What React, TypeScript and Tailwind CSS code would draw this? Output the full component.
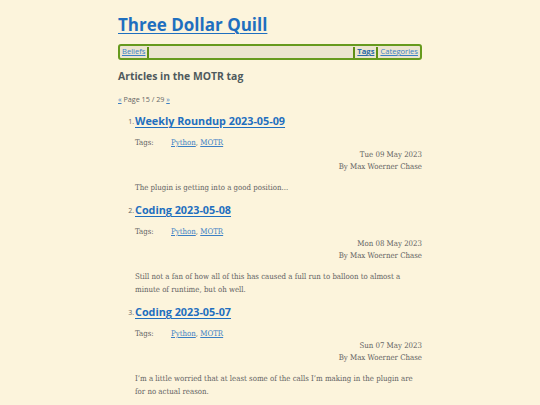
import React from "react";

const head = { fontFamily: '"Open Sans", "Noto Sans", sans-serif' };
const serif = { fontFamily: '"DejaVu Serif Condensed", "Liberation Serif", serif' };

type Post = { n: number; title: string; date: string; body: string };

const posts: Post[] = [
  { n: 1, title: "Weekly Roundup 2023-05-09", date: "Tue 09 May 2023", body: "The plugin is getting into a good position..." },
  { n: 2, title: "Coding 2023-05-08", date: "Mon 08 May 2023", body: "Still not a fan of how all of this has caused a full run to balloon to almost a minute of runtime, but oh well." },
  { n: 3, title: "Coding 2023-05-07", date: "Sun 07 May 2023", body: "I\u2019m a little worried that at least some of the calls I\u2019m making in the plugin are for no actual reason." },
];

function Sep() {
  return <span className="inline-block w-[2px] h-[11px] bg-[#5f8f14] mx-[2px]" />;
}

export default function App() {
  return (
    <div className="min-h-[405px] bg-[#fcf4dc] text-[#5a5f60]">
      <div className="w-[304px] mx-auto pt-[13px]">
        <h1 style={head} className="text-[17px] leading-[24px] font-bold">
          <a href="#" className="text-[#1f6fbf] underline decoration-1 underline-offset-2">Three Dollar Quill</a>
        </h1>
        <nav style={head} className="mt-[7px] h-[16px] border-2 border-[#669a1e] rounded-[3px] bg-[#ece5cf] flex items-center px-[2px] text-[7.6px]">
          <a href="#" className="text-[#3b7fc4] underline">Beliefs</a>
          <Sep />
          <div className="flex-1" />
          <Sep />
          <a href="#" className="text-[#2a6aa8] underline font-bold">Tags</a>
          <Sep />
          <a href="#" className="text-[#3b7fc4] underline">Categories</a>
        </nav>
        <h2 style={head} className="mt-[8px] text-[10.4px] leading-[16px] font-bold text-[#4f5a5d]">Articles in the MOTR tag</h2>
        <div style={head} className="mt-[10px] text-[7.2px] leading-[10px] text-[#666666]">
          <a href="#" className="text-[#3b7fc4] underline">«</a> Page 15 / 29 <a href="#" className="text-[#3b7fc4] underline">»</a>
        </div>
        <ol className="mt-[5px]">
          {posts.map((p) => (
            <li key={p.n} className="flex mb-[4px]">
              <span style={head} className="w-[17px] text-right pr-[1px] text-[7px] leading-[24px] pt-[1px] text-[#666666]">{p.n}.</span>
              <div className="flex-1">
                <h3 style={head} className="text-[10.8px] leading-[24px] font-bold">
                  <a href="#" className="text-[#1f6fbf] underline decoration-1 underline-offset-2">{p.title}</a>
                </h3>
                <div style={serif} className="text-[7.8px] leading-[12px] text-[#636363] mt-[4px]">
                  <div className="flex">
                    <span className="w-[36px]">Tags:</span>
                    <span>
                      <a href="#" className="text-[#3b7fc4] underline">Python</a>, <a href="#" className="text-[#3b7fc4] underline">MOTR</a>
                    </span>
                  </div>
                  <div className="text-right">{p.date}</div>
                  <div className="text-right">By Max Woerner Chase</div>
                  <p className="mt-[8px] leading-[13px] pr-[8px]">{p.body}</p>
                </div>
              </div>
            </li>
          ))}
        </ol>
      </div>
    </div>
  );
}
